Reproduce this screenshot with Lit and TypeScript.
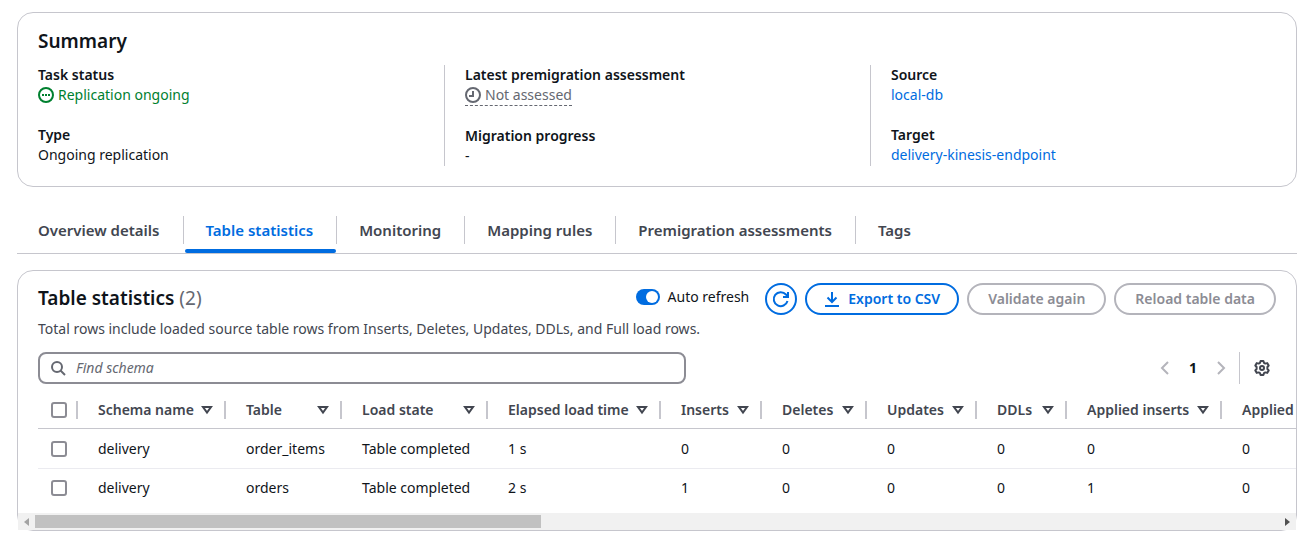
import { LitElement, html, css, svg, nothing } from "lit";
import { customElement, state } from "lit/decorators.js";

const COLUMNS = [
  { label: "Schema name", cls: "c-schema" },
  { label: "Table", cls: "c-table" },
  { label: "Load state", cls: "c-load" },
  { label: "Elapsed load time", cls: "c-elapsed" },
  { label: "Inserts", cls: "c-inserts" },
  { label: "Deletes", cls: "c-deletes" },
  { label: "Updates", cls: "c-updates" },
  { label: "DDLs", cls: "c-ddls" },
  { label: "Applied inserts", cls: "c-applied" },
  { label: "Applied", cls: "c-last" },
];

const ROWS = [
  ["delivery", "order_items", "Table completed", "1 s", "0", "0", "0", "0", "0", "0"],
  ["delivery", "orders", "Table completed", "2 s", "1", "0", "0", "0", "1", "0"],
];

const TABS = [
  "Overview details",
  "Table statistics",
  "Monitoring",
  "Mapping rules",
  "Premigration assessments",
  "Tags",
];

const icon = (body: unknown) => html`<svg class="icon" viewBox="0 0 16 16" aria-hidden="true">${body}</svg>`;

const ongoing = icon(svg`<circle cx="8" cy="8" r="7"/><path d="M4 8h2M7 8h2M10 8h2"/>`);
const pending = icon(svg`<circle cx="8" cy="8" r="7"/><path d="M8 4v5H4"/>`);
const search = icon(svg`<circle cx="7" cy="7" r="5"/><path d="m10.500 10.500 4.500 4.500"/>`);
const refresh = icon(svg`<path d="M14.500 10A7 7 0 1 1 13 3.500L15 5.500"/><path d="M10 6h5V1"/>`);
const download = icon(svg`<path d="M1 15h14M8 1v10M3.500 6.500 8 11l4.500-4.500"/>`);
const left = icon(svg`<path d="m11 2-6 6 6 6"/>`);
const right = icon(svg`<path d="m5 2 6 6-6 6"/>`);
const gear = icon(svg`<path stroke-linejoin="round" d="M6.600 1h2.800l.6 1.900 1.300.7 1.900-.5 1.500 2.400L13.400 7v2l1.300 1.500-1.500 2.400-1.900-.5-1.300.7-.6 1.900H6.600L6 13.100l-1.300-.7-1.900.5-1.500-2.400L2.600 9V7L1.300 5.500l1.500-2.400 1.900.5L6 2.900z"/><circle cx="8" cy="8" r="2"/>`);
const sort = icon(svg`<path d="M4 5h8l-4 5.500z"/>`);

@customElement("app-root")
export class AppRoot extends LitElement {
  static styles = css`
    :host {
      display: block;
      padding: 12px 13px 9px 17px;
      background: #fff;
      color: #0f141a;
      font: 14px/20px "Noto Sans", sans-serif;
    }
    * { box-sizing: border-box; }
    h2, dl, dd, dt, p { margin: 0; }
    button, input { font: inherit; color: inherit; }
    button { background: none; border: 0; padding: 0; white-space: nowrap; }
    a { color: #006ce0; text-decoration: none; }
    .icon {
      display: block;
      flex: none;
      width: 16px;
      height: 16px;
      fill: none;
      stroke: currentColor;
      stroke-width: 2;
      overflow: visible;
    }
    .card { border: 1px solid #c6c6cd; border-radius: 16px; }
    h2 { font-size: 19px; line-height: 24px; font-weight: 600; }
    .count { color: #656871; font-weight: 400; }

    .summary { padding: 16px 0 20px; }
    .summary h2 { padding: 0 20px 12px; }
    .facts { display: grid; grid-template-columns: repeat(3, 1fr); }
    .group { display: grid; gap: 20px; align-content: start; padding-left: 20px; }
    .group + .group { border-left: 1px solid #c6c6cd; }
    dt { font-weight: 600; }
    .status { display: inline-flex; align-items: center; gap: 4px; vertical-align: top; }
    .ok { color: #00802f; }
    .muted { color: #656871; border-bottom: 1px dashed #656871; }

    .tabs {
      display: flex;
      margin: 24px 0 16px;
      border-bottom: 1px solid #c6c6cd;
    }
    .tab {
      display: flex;
      flex-direction: column;
      align-items: stretch;
      color: #424650;
      font-size: 15px;
      font-weight: 600;
      line-height: 28px;
    }
    .tab-text { margin: 5px 0; padding: 0 23px 0 22px; border-left: 1px solid #c6c6cd; }
    .tab:first-child .tab-text { padding-left: 20px; border-left-color: transparent; }
    .tab::after { content: ""; height: 4px; margin-left: 2px; border-radius: 2px; }
    .tab.active { color: #006ce0; }
    .tab.active::after { background: #006ce0; }

    .head { display: flex; align-items: flex-start; padding: 12px 20px 0; }
    .head h2 { padding-top: 3px; flex: 1; }
    .actions { display: flex; gap: 8px; }
    .toggle { display: flex; align-items: center; gap: 8px; height: 28px; margin-right: 8px; }
    .switch {
      appearance: none;
      display: flex;
      width: 24px;
      height: 16px;
      margin: 0;
      padding: 2px;
      border-radius: 8px;
      background: #8c8c94;
    }
    .switch::before { content: ""; width: 12px; height: 12px; border-radius: 6px; background: #fff; }
    .switch:checked { background: #006ce0; justify-content: flex-end; }
    .btn {
      display: flex;
      align-items: center;
      justify-content: center;
      gap: 8px;
      height: 32px;
      padding: 0 19px;
      border: 2px solid #006ce0;
      border-radius: 16px;
      color: #006ce0;
      font-weight: 600;
    }
    .btn.round { width: 32px; padding: 0; }
    .btn.with-icon { padding: 0 17px; }
    .btn:disabled { border-color: #b4b4bb; color: #8c8c94; }
    .desc { padding: 4px 20px 13px; color: #424650; }

    .tools { display: flex; align-items: center; justify-content: space-between; padding: 0 20px; }
    .search {
      display: flex;
      align-items: center;
      gap: 10px;
      flex: 0 1 648px;
      height: 32px;
      padding: 0 10px;
      border: 2px solid #8c8c94;
      border-radius: 8px;
      color: #656871;
    }
    .search input { flex: 1; min-width: 0; border: 0; outline: 0; padding: 0; background: none; }
    .search input::placeholder { color: #656871; font-style: italic; opacity: 1; }
    .pager { display: flex; align-items: center; }
    .page-btn { width: 28px; display: flex; justify-content: center; color: #424650; }
    .page-btn:disabled { color: #b4b4bb; }
    .page-btn.current { color: #0f141a; font-weight: 700; }
    .prefs {
      height: 32px;
      margin-left: 4px;
      padding: 0 6px 0 14px;
      border-left: 1px solid #c6c6cd;
      color: #424650;
      display: flex;
      align-items: center;
    }

    .scroller { padding: 7px 0 6px 20px; overflow-x: auto; scrollbar-width: none; }
    table { table-layout: fixed; width: 1438px; border-collapse: separate; border-spacing: 0; }
    th, td { padding: 0; text-align: left; white-space: nowrap; }
    th { height: 38px; border-bottom: 1px solid #c6c6cd; color: #424650; font-weight: 600; }
    td { height: 38px; padding-left: 20px; }
    tbody tr:first-child td { height: 40px; border-bottom: 1px solid #ebebf0; }
    td.pick { padding-left: 13px; }
    .th {
      display: flex;
      align-items: center;
      justify-content: space-between;
      height: 18px;
      padding: 0 9px 0 20px;
      border-right: 2px solid #c6c6cd;
    }
    .th.pick { padding-left: 13px; }
    .box {
      appearance: none;
      display: block;
      flex: none;
      width: 16px;
      height: 16px;
      margin: 0;
      border: 2px solid #8c8c94;
      border-radius: 3px;
      background: #fff;
    }
    .box:checked { background: #006ce0; border-color: #006ce0; }
    .c-pick { width: 40px; }
    .c-schema { width: 148px; }
    .c-table { width: 116px; }
    .c-load { width: 146px; }
    .c-elapsed { width: 173px; }
    .c-inserts { width: 101px; }
    .c-deletes { width: 105px; }
    .c-updates { width: 110px; }
    .c-ddls { width: 90px; }
    .c-applied { width: 155px; }

    .bar { display: flex; align-items: center; height: 17px; background: #f1f1f1; }
    .arrow { width: 17px; height: 17px; display: flex; align-items: center; justify-content: center; color: #a3a3a3; }
    .arrow.on { color: #505050; }
    .arrow svg { width: 5px; height: 8px; fill: currentColor; }
    .track { flex: 1; }
    .thumb { width: 40.7%; height: 13px; background: #c1c1c1; }
  `;

  @state() private tab = 1;

  render() {
    return html`
      <section class="card summary">
        <h2>Summary</h2>
        <div class="facts">
          <dl class="group">
            <div><dt>Task status</dt><dd><span class="status ok">${ongoing}Replication ongoing</span></dd></div>
            <div><dt>Type</dt><dd>Ongoing replication</dd></div>
          </dl>
          <dl class="group">
            <div><dt>Latest premigration assessment</dt><dd><span class="status muted">${pending}Not assessed</span></dd></div>
            <div><dt>Migration progress</dt><dd>-</dd></div>
          </dl>
          <dl class="group">
            <div><dt>Source</dt><dd><a href="#source">local-db</a></dd></div>
            <div><dt>Target</dt><dd><a href="#target">delivery-kinesis-endpoint</a></dd></div>
          </dl>
        </div>
      </section>

      <div class="tabs" role="tablist">
        ${TABS.map((t, i) => html`<button
          class="tab ${i === this.tab ? "active" : ""}"
          role="tab"
          aria-selected=${i === this.tab}
          @click=${() => (this.tab = i)}
        ><span class="tab-text">${t}</span></button>`)}
      </div>

      <section class="card">
        <div class="head">
          <h2>Table statistics <span class="count">(2)</span></h2>
          <div class="actions">
            <label class="toggle"><input class="switch" type="checkbox" role="switch" checked />Auto refresh</label>
            <button class="btn round" aria-label="Refresh">${refresh}</button>
            <button class="btn with-icon">${download}Export to CSV</button>
            <button class="btn" disabled>Validate again</button>
            <button class="btn" disabled>Reload table data</button>
          </div>
        </div>
        <p class="desc">Total rows include loaded source table rows from Inserts, Deletes, Updates, DDLs, and Full load rows.</p>
        <div class="tools">
          <label class="search">${search}<input type="search" placeholder="Find schema" aria-label="Find schema" /></label>
          <div class="pager">
            <button class="page-btn" disabled aria-label="Previous page">${left}</button>
            <button class="page-btn current">1</button>
            <button class="page-btn" disabled aria-label="Next page">${right}</button>
            <button class="prefs" aria-label="Preferences">${gear}</button>
          </div>
        </div>
        <div class="scroller">
          <table>
            <colgroup>
              <col class="c-pick" />
              ${COLUMNS.map((c) => html`<col class=${c.cls} />`)}
            </colgroup>
            <thead>
              <tr>
                <th><div class="th pick"><input class="box" type="checkbox" aria-label="Select all" /></div></th>
                ${COLUMNS.map((c) => html`<th scope="col"><div class="th">${c.label}${c.cls === "c-last" ? nothing : sort}</div></th>`)}
              </tr>
            </thead>
            <tbody>
              ${ROWS.map((r) => html`<tr>
                <td class="pick"><input class="box" type="checkbox" aria-label="Select ${r[1]}" /></td>
                ${r.map((v) => html`<td>${v}</td>`)}
              </tr>`)}
            </tbody>
          </table>
        </div>
        <div class="bar" aria-hidden="true">
          <span class="arrow"><svg viewBox="0 0 5 8"><path d="M5 0v8L0 4z" /></svg></span>
          <div class="track"><div class="thumb"></div></div>
          <span class="arrow on"><svg viewBox="0 0 5 8"><path d="M0 0v8l5-4z" /></svg></span>
        </div>
      </section>
    `;
  }
}
